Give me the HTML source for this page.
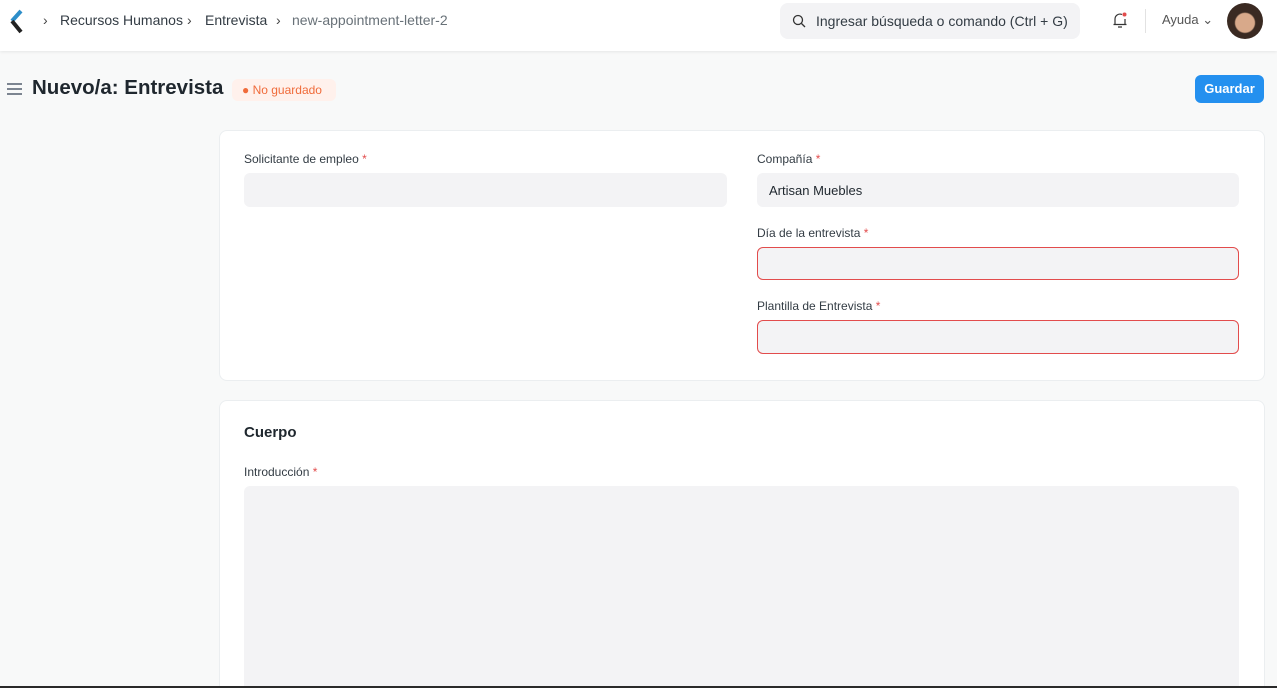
<!DOCTYPE html>
<html style="overflow:hidden;width:1277px;height:688px"><head><meta charset="utf-8"><style>
*{box-sizing:border-box;margin:0;padding:0}
body{width:1277px;height:688px;overflow:hidden;background:#f8f9f9;font-family:"Liberation Sans",sans-serif;color:#1f272e;position:relative}
.nav{position:absolute;left:0;top:0;width:1277px;height:51px;background:#fff;box-shadow:0 1px 3px rgba(0,0,0,.08)}
.crumb{position:absolute;top:12px;font-size:14px;color:#333c44}
.sep{position:absolute;top:12px;font-size:14px;color:#444}
.search{position:absolute;left:780px;top:3px;width:300px;height:36px;background:#f3f3f5;border-radius:8px;font-size:14px;color:#333c44;padding:10px 0 0 36px}
.card{position:absolute;left:219px;width:1046px;background:#fff;border:1px solid #ebeef0;border-radius:8px;overflow:hidden}
.lbl{position:absolute;font-size:12px;color:#333c44}
.lbl b{color:#e24c4c;font-weight:normal}
.inp{position:absolute;height:34px;background:#f3f3f5;border-radius:6px}
.err{border:1px solid #e24c4c}
</style></head><body>
<div class="nav">
<svg style="position:absolute;left:9px;top:9px" width="16" height="26" viewBox="0 0 16 26"><path d="M12 2 L3 12" stroke="#2d8ec9" stroke-width="4" fill="none"/><path d="M3 12 L12 23" stroke="#222" stroke-width="4" fill="none"/></svg>
<span class="sep" style="left:43px">›</span>
<span class="crumb" style="left:60px">Recursos Humanos</span>
<span class="sep" style="left:187px">›</span>
<span class="crumb" style="left:205px">Entrevista</span>
<span class="sep" style="left:276px">›</span>
<span class="crumb" style="left:292px;color:#687178">new-appointment-letter-2</span>
<div class="search"><svg style="position:absolute;left:12px;top:11px" width="14" height="14" viewBox="0 0 14 14"><circle cx="6" cy="6" r="4.5" stroke="#333" stroke-width="1.3" fill="none"/><path d="M9.5 9.5L13 13" stroke="#333" stroke-width="1.3"/></svg>Ingresar búsqueda o comando (Ctrl + G)</div>
<svg style="position:absolute;left:1112px;top:11px" width="16" height="18" viewBox="0 0 16 18"><path d="M3 13 V8 A5 5 0 0 1 10 3.5 M13 8 V13 M1.5 13.5 H14.5 M6 16 H10" stroke="#333" stroke-width="1.2" fill="none"/><circle cx="12.5" cy="3.5" r="2" fill="#e24c4c"/></svg>
<div style="position:absolute;left:1145px;top:9px;width:1px;height:24px;background:#e2e2e2"></div>
<span class="crumb" style="left:1162px;font-size:13px;color:#555">Ayuda ⌄</span>
<div style="position:absolute;left:1227px;top:3px;width:36px;height:36px;border-radius:50%;background:radial-gradient(circle at 50% 55%,#d8a98a 0 35%,#3a2a22 40%)"></div>
</div>
<div style="position:absolute;left:7px;top:83px;width:15px;height:2px;background:#7c8591;box-shadow:0 5px 0 #7c8591,0 10px 0 #7c8591"></div>
<div style="position:absolute;left:32px;top:76px;font-size:20.5px;font-weight:bold">Nuevo/a: Entrevista</div>
<div style="position:absolute;left:232px;top:79px;height:22px;width:104px;background:#fff1ec;border-radius:6px;font-size:12px;color:#f06b3a;padding:4px 0 0 10px">● No guardado</div>
<div style="position:absolute;left:1195px;top:75px;width:69px;height:28px;background:#2490ef;border-radius:6px;color:#fff;font-size:13px;font-weight:bold;text-align:center;line-height:28px">Guardar</div>
<div class="card" style="top:130px;height:251px">
<div class="lbl" style="left:24px;top:21px">Solicitante de empleo <b>*</b></div>
<div class="inp" style="left:24px;top:42px;width:483px"></div>
<div class="lbl" style="left:537px;top:21px">Compañía <b>*</b></div>
<div class="inp" style="left:537px;top:42px;width:482px;font-size:13px;padding:10px 12px">Artisan Muebles</div>
<div class="lbl" style="left:537px;top:95px">Día de la entrevista <b>*</b></div>
<div class="inp err" style="left:537px;top:116px;width:482px;height:33px"></div>
<div class="lbl" style="left:537px;top:168px">Plantilla de Entrevista <b>*</b></div>
<div class="inp err" style="left:537px;top:189px;width:482px;height:34px"></div>
</div>
<div class="card" style="top:400px;height:300px">
<div style="position:absolute;left:24px;top:23px;font-size:15px;font-weight:bold">Cuerpo</div>
<div class="lbl" style="left:24px;top:64px">Introducción <b>*</b></div>
<div class="inp" style="left:24px;top:85px;width:995px;height:220px"></div>
</div>
<div style="position:absolute;left:0;top:686px;width:1277px;height:2px;background:#2a2a2a"></div>
</body></html>
